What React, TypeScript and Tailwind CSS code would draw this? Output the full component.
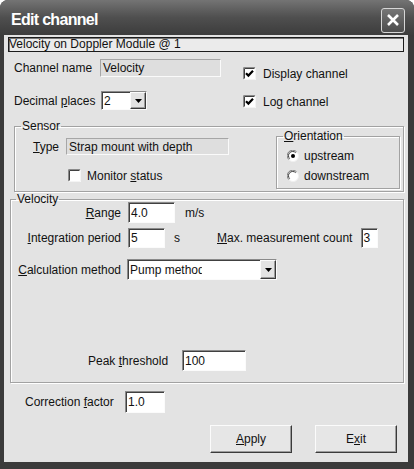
import React from 'react';

const sunken =
  'border border-t-[#8a8a8a] border-l-[#8a8a8a] border-b-[#fbfbfb] border-r-[#fbfbfb] shadow-[inset_1px_1px_0_#404040]';
const raised =
  'border border-t-[#fbfbfb] border-l-[#fbfbfb] border-b-[#3a3a3a] border-r-[#3a3a3a] shadow-[inset_-1px_-1px_0_#9c9c9c]';
const readonly =
  'border border-t-[#a6a6a6] border-l-[#a6a6a6] border-b-[#fafafa] border-r-[#fafafa] bg-[#dedede]';
const etched = 'border border-[#a2a2a2] shadow-[1px_1px_0_#fff,inset_1px_1px_0_#fff]';

const U = ({ children }: { children: React.ReactNode }) => (
  <span className="underline underline-offset-[1px]">{children}</span>
);

const Check = ({ checked }: { checked?: boolean }) => (
  <svg width="13" height="13" viewBox="0 0 13 13" className="shrink-0">
    <rect x="0" y="0" width="13" height="13" fill="#fff" />
    <path d="M0.5 12.5V0.5H12.5" stroke="#8a8a8a" fill="none" />
    <path d="M1.5 11.5V1.5H11.5" stroke="#404040" fill="none" />
    <path d="M0.5 12.5H12.5V0.5" stroke="#f4f4f4" fill="none" />
    {checked && (
      <path d="M3 6.2L5.4 8.6L10 3.8" stroke="#000" strokeWidth="2.2" fill="none" />
    )}
  </svg>
);

const Radio = ({ checked }: { checked?: boolean }) => (
  <svg width="12" height="12" viewBox="0 0 12 12" className="shrink-0">
    <circle cx="6" cy="6" r="5.5" fill="#fff" stroke="#f0f0f0" />
    <path d="M1.8 9.6A5 5 0 0 1 9.6 1.8" stroke="#7a7a7a" fill="none" />
    <path d="M2.7 8.7A3.9 3.9 0 0 1 8.7 2.7" stroke="#3a3a3a" fill="none" />
    {checked && <circle cx="6" cy="6" r="2" fill="#000" />}
  </svg>
);

const DropButton = () => (
  <div className={`w-[16px] h-full ml-auto flex items-center justify-center bg-[#e3e3e3] ${raised}`}>
    <svg width="7" height="4" viewBox="0 0 7 4">
      <polygon points="0,0 7,0 3.5,4" fill="#000" />
    </svg>
  </div>
);

const App = () => {
  return (
    <div className="w-[414px] h-[469px] bg-white font-['Liberation_Sans',Arial,sans-serif] text-[12px] leading-[14px] text-[#111]">
      <div className="w-full h-full flex flex-col rounded-t-[8px] bg-[#3b3b3b] overflow-hidden">
        {/* Title bar */}
        <div className="h-[35px] shrink-0 flex items-center pt-[5px] bg-gradient-to-b from-[#747474] via-[#4f4f4f] to-[#3c3c3c]">
          <span className="ml-[11px] text-white font-bold text-[16px] leading-[18px] tracking-[-0.7px]">
            Edit channel
          </span>
          <div className="ml-auto mr-[9px] w-[24px] h-[25px] rounded-[3px] border border-[#d6d6d6] bg-gradient-to-b from-[#777] to-[#4c4c4c] flex items-center justify-center">
            <svg width="14" height="14" viewBox="0 0 14 14">
              <path d="M2 2L12 12M12 2L2 12" stroke="#fff" strokeWidth="2.6" />
            </svg>
          </div>
        </div>

        {/* Client area */}
        <div className="flex-1 ml-[4px] mr-[6px] mb-[7px] bg-[#e3e3e3] flex flex-col">
          <div className="mt-[2px] ml-[4px] w-[396px] h-[15px] border border-[#1c1c1c] shadow-[inset_1px_1px_0_#777] bg-[#ebebeb] leading-[13px] whitespace-nowrap overflow-hidden">
            Velocity on Doppler Module @ 1
          </div>

          {/* Channel options */}
          <div className="flex">
            <div className="ml-[10px] flex flex-col">
              <div className="mt-[7px] h-[18px] flex items-center">
                <span className="w-[86px]">Channel name</span>
                <div className={`w-[121px] h-[18px] pl-[2px] flex items-center ${readonly}`}>Velocity</div>
              </div>
              <div className="mt-[14px] h-[19px] flex items-center">
                <span className="w-[87px]">
                  Decimal <U>p</U>laces
                </span>
                <div className={`w-[46px] h-[19px] flex items-center bg-white ${sunken}`}>
                  <span className="pl-[2px]">2</span>
                  <DropButton />
                </div>
              </div>
            </div>
            <div className="ml-[22px] flex flex-col">
              <div className="mt-[15px] h-[13px] flex items-center gap-[7px]">
                <Check checked />
                <span>Display channel</span>
              </div>
              <div className="mt-[15px] h-[13px] flex items-center gap-[7px]">
                <Check checked />
                <span>Log channel</span>
              </div>
            </div>
          </div>

          {/* Sensor */}
          <fieldset className={`mt-[9px] ml-[10px] w-[390px] h-[73px] ${etched}`}>
            <legend className="ml-[6px] px-[1px] leading-[14px]">Sensor</legend>
            <div className="flex">
              <div className="flex flex-col">
                <div className="mt-[5px] h-[17px] flex items-center">
                  <span className="pl-[18px] w-[51px]">
                    <U>T</U>ype
                  </span>
                  <div className={`w-[163px] h-[17px] pl-[2px] flex items-center ${readonly}`}>
                    Strap mount with depth
                  </div>
                </div>
                <div className="mt-[14px] h-[13px] pl-[53px] flex items-center gap-[6px]">
                  <Check />
                  <span>
                    Monitor <U>s</U>tatus
                  </span>
                </div>
              </div>
              <fieldset className={`ml-auto mr-[3px] -mt-[4px] w-[124px] h-[60px] ${etched}`}>
                <legend className="ml-[6px] px-[1px] leading-[14px]">
                  <U>O</U>rientation
                </legend>
                <div className="ml-[10px] flex flex-col">
                  <div className="mt-[5px] h-[16px] flex items-center gap-[5px]">
                    <Radio checked />
                    <span>upstream</span>
                  </div>
                  <div className="mt-[4px] h-[16px] flex items-center gap-[5px]">
                    <Radio />
                    <span>downstream</span>
                  </div>
                </div>
              </fieldset>
            </div>
          </fieldset>

          {/* Velocity */}
          <fieldset className={`ml-[6px] w-[394px] h-[191px] ${etched}`}>
            <legend className="ml-[5px] px-[1px] leading-[14px]">Velocity</legend>
            <div className="flex flex-col">
              <div className="-mt-[4px] h-[21px] flex items-center">
                <span className="w-[110px] text-right">
                  <U>R</U>ange
                </span>
                <div className={`ml-[7px] w-[47px] h-[21px] pl-[2px] flex items-center bg-white ${sunken}`}>4.0</div>
                <span className="ml-[10px]">m/s</span>
              </div>
              <div className="mt-[5px] h-[20px] flex items-center">
                <span className="w-[110px] text-right">
                  <U>I</U>ntegration period
                </span>
                <div className={`ml-[7px] w-[37px] h-[20px] pl-[2px] flex items-center bg-white ${sunken}`}>5</div>
                <span className="w-[52px] pl-[9px]">s</span>
                <span>
                  <U>M</U>ax. measurement count
                </span>
                <div className={`ml-[9px] w-[17px] h-[20px] pl-[1px] flex items-center bg-white ${sunken}`}>3</div>
              </div>
              <div className="mt-[11px] h-[21px] flex items-center">
                <span className="w-[110px] text-right">
                  <U>C</U>alculation method
                </span>
                <div className={`ml-[6px] w-[150px] h-[21px] flex items-center bg-white ${sunken}`}>
                  <span className="pl-[2px] w-[74px] overflow-hidden whitespace-nowrap">Pump method</span>
                  <DropButton />
                </div>
              </div>
              <div className="mt-[70px] h-[21px] pl-[77px] flex items-center">
                <span className="w-[94px]">
                  Peak <U>t</U>hreshold
                </span>
                <div className={`w-[64px] h-[21px] pl-[2px] flex items-center bg-white ${sunken}`}>100</div>
              </div>
            </div>
          </fieldset>

          {/* Correction */}
          <div className="mt-[8px] h-[22px] pl-[21px] flex items-center">
            <span className="w-[100px]">
              Correction <U>f</U>actor
            </span>
            <div className={`w-[40px] h-[22px] pl-[2px] flex items-center bg-white ${sunken}`}>1.0</div>
          </div>

          {/* Buttons */}
          <div className="mt-[12px] mr-[11px] flex justify-end gap-[23px]">
            <button className={`w-[82px] h-[28px] flex items-center justify-center bg-[#e6e6e6] ${raised}`}>
              <span>
                <U>A</U>pply
              </span>
            </button>
            <button className={`w-[82px] h-[28px] flex items-center justify-center bg-[#e6e6e6] ${raised}`}>
              <span>
                E<U>x</U>it
              </span>
            </button>
          </div>
        </div>
      </div>
    </div>
  );
};

export default App;
